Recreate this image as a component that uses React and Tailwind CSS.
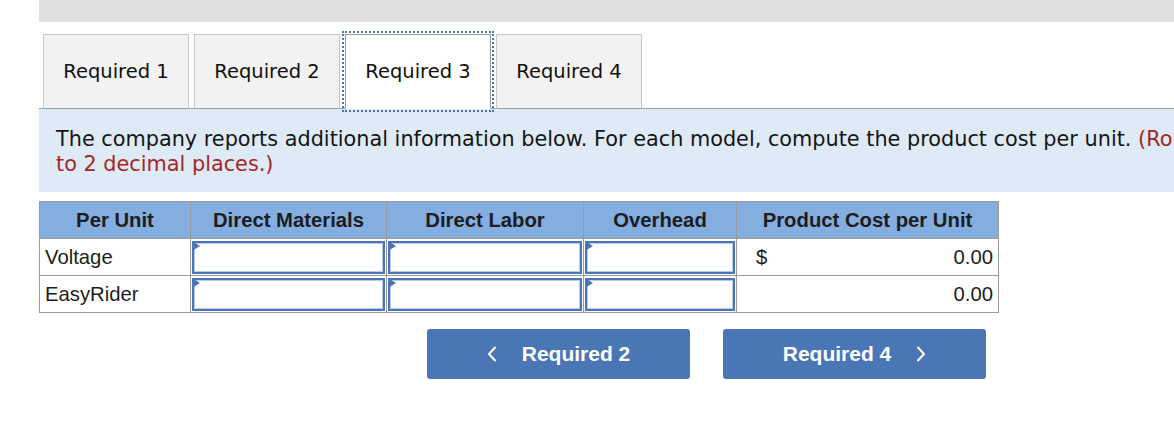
import React from 'react';

const tabs = ['Required 1', 'Required 2', 'Required 3', 'Required 4'];

const rows = [
  { name: 'Voltage', total: '0.00', dollar: true },
  { name: 'EasyRider', total: '0.00', dollar: false },
];

// cajita de entrada con el triangulito azul arriba a la izquierda
const InputCell = () => (
  <td className="p-[1px] border border-[#9a9a9a]">
    <div className="relative h-[33px] border-2 border-[#4a76b5] bg-white shadow-[inset_0_0_0_1px_#b7cbe8]">
      <span className="absolute -left-[2px] -top-[2px] w-0 h-0 border-t-[5px] border-b-[5px] border-l-[8px] border-t-transparent border-b-transparent border-l-[#4a76b5]"></span>
    </div>
  </td>
);

const Chevron = ({ dir }) => (
  <svg width="10" height="16" viewBox="0 0 10 16" fill="none" stroke="white" strokeWidth="2" strokeLinecap="round" strokeLinejoin="round">
    {dir === 'left' ? <path d="M8 1.5 L2 8 L8 14.5" /> : <path d="M2 1.5 L8 8 L2 14.5" />}
  </svg>
);

export default function App() {
  return (
    <div className="w-[1174px] h-[440px] overflow-hidden bg-white">
      <div className="pl-[39px] w-[1400px]">
        <div className="h-[22px] bg-[#e0e0e0]"></div>

        {/* TABS */}
        <div className="mt-[12px] flex gap-[5px] pl-[4px] border-b border-[#a0a0a0]" style={{ fontFamily: '"DejaVu Sans", Verdana, sans-serif' }}>
          {tabs.map((t, i) => (
            <div
              key={t}
              className={`w-[146px] h-[75px] -mb-px flex items-center justify-center text-[19.5px] text-[#111] border ${i === 2 ? 'bg-white border-[#9a9a9a] border-b-white outline-2 outline-dotted outline-[#4a76c0] outline-offset-[1px]' : 'bg-[#f2f2f2] border-[#c8c8c8] border-b-[#a0a0a0]'}`}
            >
              {t}
            </div>
          ))}
        </div>

        {/* INFO */}
        <div className="bg-[#dfeaf7] pt-[18px] pb-[15px] px-[17px] text-[20.8px] leading-[25px] text-[#151515] whitespace-nowrap" style={{ fontFamily: '"DejaVu Sans", Verdana, sans-serif' }}>
          The company reports additional information below. For each model, compute the product cost per unit. <span className="text-[#a3281f]">(Round your answers</span>
          <br />
          <span className="text-[#a3281f]">to 2 decimal places.)</span>
        </div>

        {/* TABLE */}
        <table className="mt-[9px] table-fixed border-collapse border border-[#9a9a9a] text-[20.3px] text-[#1d1d1d]" style={{ fontFamily: '"Liberation Sans", Arial, sans-serif', width: 959 }}>
          <colgroup>
            <col className="w-[151px]" />
            <col className="w-[196px]" />
            <col className="w-[197px]" />
            <col className="w-[153px]" />
            <col className="w-[262px]" />
          </colgroup>
          <thead>
            <tr className="h-[37px] bg-[#84ade0] font-bold">
              <th className="border border-[#9a9a9a] font-bold">Per Unit</th>
              <th className="border border-[#9a9a9a] font-bold">Direct Materials</th>
              <th className="border border-[#9a9a9a] font-bold">Direct Labor</th>
              <th className="border border-[#9a9a9a] font-bold">Overhead</th>
              <th className="border border-[#9a9a9a] font-bold">Product Cost per Unit</th>
            </tr>
          </thead>
          <tbody>
            {rows.map((r) => (
              <tr key={r.name} className="h-[37px]">
                <td className="border border-[#9a9a9a] pl-[5px]">{r.name}</td>
                <InputCell />
                <InputCell />
                <InputCell />
                <td className="border border-[#9a9a9a] px-[5px]">
                  <div className="flex justify-between pl-[14px]">
                    <span>{r.dollar ? '$' : ''}</span>
                    <span>{r.total}</span>
                  </div>
                </td>
              </tr>
            ))}
          </tbody>
        </table>

        {/* NAV */}
        <div className="mt-[16px] ml-[388px] flex gap-[33px] text-[21px] font-bold text-white" style={{ fontFamily: '"Liberation Sans", Arial, sans-serif' }}>
          <button className="w-[263px] h-[50px] rounded-[3px] bg-[#4a76b5] flex items-center justify-center gap-[25px]">
            <Chevron dir="left" />
            <span>Required 2</span>
          </button>
          <button className="w-[263px] h-[50px] rounded-[3px] bg-[#4a76b5] flex items-center justify-center gap-[25px]">
            <span>Required 4</span>
            <Chevron dir="right" />
          </button>
        </div>
      </div>
    </div>
  );
}
